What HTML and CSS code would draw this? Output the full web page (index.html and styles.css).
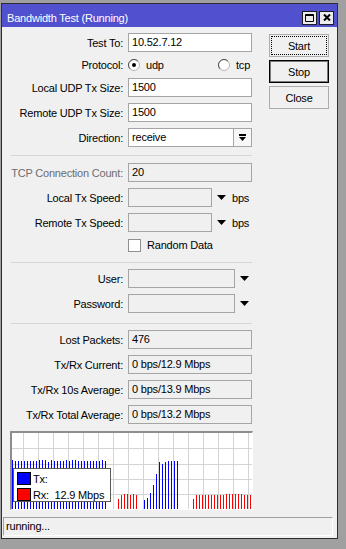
FILE: index.html
```html
<!DOCTYPE html>
<html lang="en">
<head>
<meta charset="UTF-8" />
<meta name="viewport" content="width=device-width, initial-scale=1" />
<title>Bandwidth Test (Running)</title>
<link rel="stylesheet" href="styles.css">
</head>
<body>
<div class="window" role="dialog" aria-label="Bandwidth Test">
<div class="titlebar">
<span class="title">Bandwidth Test (Running)</span>
<span class="tbtn" aria-label="Maximize">
<svg width="9" height="8" viewBox="0 0 9 8"><path d="M0.5 0.5h8v7h-8z" fill="none" stroke="#000"/><path d="M0 1.5h9" stroke="#000"/></svg>
</span>
<span class="tbtn" aria-label="Close">
<svg width="8" height="7" viewBox="0 0 8 7"><path d="M1 0.5l6 6M7 0.5l-6 6" stroke="#000" stroke-width="2"/></svg>
</span>
</div>
<div class="main">
<div class="form">
<div class="section">
<div class="row"><span class="lbl">Test To:</span><span class="field edit">10.52.7.12</span></div>
<div class="row short"><span class="lbl">Protocol:</span>
<span class="opt first"><svg class="radio" width="12" height="12" viewBox="0 0 12 12"><circle cx="6" cy="6" r="5.5" fill="#fff" stroke="#b4b4b4"/><path d="M2.1 9.9A5.5 5.5 0 0 1 9.9 2.1" fill="none" stroke="#505050"/><circle cx="6" cy="6" r="2" fill="#000"/></svg>udp</span>
<span class="opt"><svg class="radio" width="12" height="12" viewBox="0 0 12 12"><circle cx="6" cy="6" r="5.5" fill="#fff" stroke="#b4b4b4"/><path d="M2.1 9.9A5.5 5.5 0 0 1 9.9 2.1" fill="none" stroke="#505050"/></svg>tcp</span>
</div>
<div class="row"><span class="lbl">Local UDP Tx Size:</span><span class="field edit">1500</span></div>
<div class="row"><span class="lbl">Remote UDP Tx Size:</span><span class="field edit">1500</span></div>
<div class="row"><span class="lbl">Direction:</span><span class="field edit select">receive</span>
<span class="drop-btn"><svg width="7" height="8" viewBox="0 0 7 8"><rect width="7" height="2" fill="#000"/><path d="M0 3h7l-3.5 4z" fill="#000"/></svg></span></div>
</div>
<div class="sep sep-1"></div>
<div class="section">
<div class="row"><span class="lbl disabled">TCP Connection Count:</span><span class="field">20</span></div>
<div class="row"><span class="lbl">Local Tx Speed:</span><span class="field speed"></span>
<svg class="arrow" width="9" height="5" viewBox="0 0 9 5"><path d="M0 0h9l-4.5 5z" fill="#000"/></svg><span class="unit">bps</span></div>
<div class="row"><span class="lbl">Remote Tx Speed:</span><span class="field speed"></span>
<svg class="arrow" width="9" height="5" viewBox="0 0 9 5"><path d="M0 0h9l-4.5 5z" fill="#000"/></svg><span class="unit">bps</span></div>
<div class="row short"><span class="lbl"></span><span class="check"></span><span>Random Data</span></div>
</div>
<div class="sep sep-2"></div>
<div class="section">
<div class="row"><span class="lbl">User:</span><span class="field login"></span>
<svg class="arrow" width="9" height="5" viewBox="0 0 9 5"><path d="M0 0h9l-4.5 5z" fill="#000"/></svg></div>
<div class="row"><span class="lbl">Password:</span><span class="field login"></span>
<svg class="arrow" width="9" height="5" viewBox="0 0 9 5"><path d="M0 0h9l-4.5 5z" fill="#000"/></svg></div>
</div>
<div class="sep sep-3"></div>
<div class="section">
<div class="row"><span class="lbl">Lost Packets:</span><span class="field">476</span></div>
<div class="row"><span class="lbl">Tx/Rx Current:</span><span class="field">0 bps/12.9 Mbps</span></div>
<div class="row"><span class="lbl">Tx/Rx 10s Average:</span><span class="field">0 bps/13.9 Mbps</span></div>
<div class="row"><span class="lbl">Tx/Rx Total Average:</span><span class="field">0 bps/13.2 Mbps</span></div>
</div>
<div class="graph">
<svg width="240" height="76" viewBox="0 0 240 76">
<path d="M11.5 0V76M26.5 0V76M41.5 0V76M56.5 0V76M71.5 0V76M86.5 0V76M101.5 0V76M116.5 0V76M131.5 0V76M146.5 0V76M161.5 0V76M176.5 0V76M191.5 0V76M206.5 0V76M221.5 0V76M236.5 0V76M0 15.5H240M0 31.5H240M0 46.5H240M0 61.5H240" stroke="#d4d4d4" fill="none"/>
<path d="M0.5 27V76M3.5 28V76M6.5 28V76M9.5 28V76M12.5 28V76M15.5 28V76M18.5 28V76M21.5 28V76M24.5 28V76M27.5 27V76M30.5 27V76M33.5 27V76M36.5 29V76M39.5 27V76M42.5 28V76M45.5 28V76M48.5 28V76M51.5 28V76M54.5 27V76M57.5 28V76M60.5 27V76M63.5 27V76M66.5 28V76M69.5 28V76M72.5 28V76M75.5 28V76M78.5 28V76M81.5 28V76M84.5 28V76M87.5 28V76M90.5 27V76M93.5 28V76M132.5 67V76M135.5 65V76M138.5 60V76M141.5 52V76M144.5 41V76M147.5 29V76M150.5 31V76M153.5 29V76M156.5 28V76M159.5 28V76M162.5 28V76M165.5 28V76" stroke="#0000ff" fill="none"/>
<path d="M106.5 66V76M109.5 62V76M112.5 61V76M115.5 61V76M118.5 62V76M121.5 61V76M124.5 62V76M181.5 66V76M184.5 62V76M187.5 62V76M190.5 62V76M193.5 62V76M196.5 62V76M199.5 62V76M202.5 62V76M205.5 62V76M208.5 62V76M211.5 62V76M214.5 61V76M217.5 61V76M220.5 61V76M223.5 61V76M226.5 61V76M229.5 61V76M232.5 62V76M235.5 62V76M238.5 62V76" stroke="#ff0000" fill="none"/>
</svg>
<div class="legend">
<div class="legend-row"><span class="swatch tx"></span><span>Tx:</span></div>
<div class="legend-row"><span class="swatch rx"></span><span class="pre">Rx:  12.9 Mbps</span></div>
</div>
</div>
</div>
<div class="side">
<button class="btn focused" type="button">Start</button>
<button class="btn default" type="button">Stop</button>
<button class="btn" type="button">Close</button>
</div>
</div>
<div class="status">running...</div>
</div>
</body>
</html>
```

FILE: styles.css
```css
:root {
--desk-bg: #a0a0a0;
--window-bg: #f0f0f0;
--title-bg: #5151cf;
--field-border: #a5a5a5;
--text-color: #000;
--muted-color: #6d6d6d;
--font-family: "Liberation Sans", Arial, sans-serif;
}
* {
box-sizing: border-box;
}
body {
margin: 0;
padding: 3px 0 0 1px;
background: var(--desk-bg);
color: var(--text-color);
font-family: var(--font-family);
font-size: 11px;
letter-spacing: -0.2px;
}
.window {
width: 337px;
border: 1px solid #2e2e2e;
background: var(--window-bg);
padding-bottom: 2px;
}
.titlebar {
height: 23px;
background: var(--title-bg);
color: #fff;
display: flex;
align-items: center;
gap: 2px;
padding: 4px 3px 0 5px;
}
.title {
flex: 1;
}
.tbtn {
width: 15px;
height: 14px;
background: #ececec;
border: 1px solid #1c1c1c;
display: flex;
align-items: center;
justify-content: center;
}
.tbtn svg {
display: block;
}
.main {
display: flex;
padding: 6px 0 0 8px;
}
.form {
width: 243px;
}
.section {
display: flex;
flex-direction: column;
gap: 6px;
}
.row {
display: flex;
align-items: center;
height: 19px;
}
.row.short {
height: 14px;
}
.lbl {
width: 113px;
margin-right: 5px;
display: flex;
justify-content: flex-end;
white-space: nowrap;
flex-shrink: 0;
}
.lbl.disabled {
color: var(--muted-color);
}
.field {
width: 124px;
height: 19px;
border: 1px solid var(--field-border);
background: var(--window-bg);
padding-left: 3px;
line-height: 17px;
white-space: nowrap;
overflow: hidden;
flex-shrink: 0;
}
.field.edit {
background: #fff;
}
.field.select {
width: 106px;
}
.field.speed {
width: 84px;
}
.field.login {
width: 107px;
}
.drop-btn {
width: 18px;
height: 19px;
border: 1px solid var(--field-border);
border-left: none;
background: #f7f7f7;
display: flex;
align-items: center;
justify-content: center;
}
.drop-btn svg {
display: block;
}
.arrow {
display: block;
margin-left: 5px;
}
.unit {
margin-left: 6px;
}
.opt {
display: flex;
align-items: center;
gap: 6px;
}
.opt.first {
width: 90px;
}
.radio {
display: block;
}
.check {
width: 13px;
height: 13px;
border: 1px solid #8f8f8f;
background: #fff;
margin-right: 6px;
}
.sep {
height: 1px;
width: 241px;
margin-left: 1px;
background: #d6d6d6;
}
.sep-1 {
margin-top: 8px;
margin-bottom: 7px;
}
.sep-2 {
margin-top: 10px;
margin-bottom: 6px;
}
.sep-3 {
margin-top: 10px;
margin-bottom: 6px;
}
.graph {
position: relative;
margin-top: 7px;
width: 243px;
height: 79px;
border-style: solid;
border-width: 2px 1px 1px 2px;
border-color: #8d8d8d #fff #fff #8d8d8d;
background: #fff;
}
.graph svg {
display: block;
}
.legend {
position: absolute;
left: 1px;
top: 35px;
width: 98px;
height: 34px;
background: #fff;
border: 1px solid #5a5a5a;
padding: 3px 0 0 3px;
display: flex;
flex-direction: column;
gap: 3px;
}
.legend-row {
display: flex;
align-items: center;
gap: 2px;
height: 13px;
}
.swatch {
width: 14px;
height: 13px;
border: 1px solid #000;
}
.swatch.tx {
background: #0000ff;
}
.swatch.rx {
background: #ff0000;
}
.pre {
white-space: pre;
}
.side {
display: flex;
flex-direction: column;
gap: 3px;
margin-left: 16px;
padding-top: 1px;
}
.btn {
width: 60px;
height: 23px;
border: 1px solid #adadad;
background: var(--window-bg);
font-family: var(--font-family);
font-size: 11px;
letter-spacing: -0.2px;
color: var(--text-color);
padding: 0;
}
.btn.focused {
outline: 1px dotted #000;
outline-offset: -3px;
}
.btn.default {
border-color: #000;
box-shadow: inset 0 0 0 1px #7a7a7a;
}
.status {
margin: 7px 4px 0 1px;
height: 19px;
border-style: solid;
border-width: 1px;
border-color: #a0a0a0 #fff #fff #a0a0a0;
padding-left: 2px;
line-height: 17px;
}
```
